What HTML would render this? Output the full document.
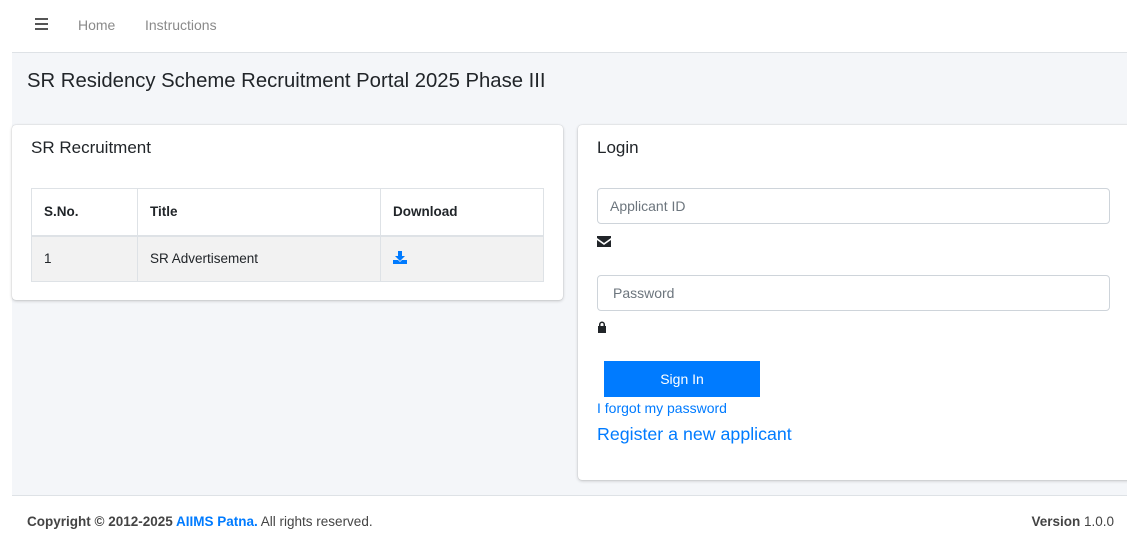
<!DOCTYPE html>
<html><head><meta charset="utf-8"><style>
*{box-sizing:border-box;margin:0;padding:0}
body{width:1127px;height:551px;overflow:hidden;background:#fff;font-family:"Liberation Sans",sans-serif;color:#212529;position:relative}
.a{position:absolute}
.nav{left:12px;top:0;width:1115px;height:53px;border-bottom:1px solid #dee2e6;background:#fff}
.navt{color:#8a8a8a;font-size:14px;top:17px}
.bg{left:12px;top:53px;width:1115px;height:442px;background:#f4f6f9}
.card{background:#fff;border-radius:4px;box-shadow:0 0 1px rgba(0,0,0,.2),0 1px 3px rgba(0,0,0,.2)}
table{border-collapse:collapse;font-size:13.5px}
td,th{border:1px solid #dee2e6;padding:0 12px;text-align:left}
th{height:47px;border-bottom:2px solid #dee2e6}
td{height:46px;background:#f2f2f2}
.inp{border:1px solid #ced4da;border-radius:4px;height:36px;width:513px;color:#6c757d;font-size:14px;padding:9px 12px}
.foot{left:12px;top:495px;width:1115px;height:56px;border-top:1px solid #dee2e6;font-size:13.5px;color:#444}
</style></head><body>
<div class="a nav"></div>
<div class="a" style="left:35px;top:18px;width:13px;height:2px;background:#555;box-shadow:0 5px 0 #555,0 10px 0 #555"></div>
<div class="a navt" style="left:78px">Home</div>
<div class="a navt" style="left:145px">Instructions</div>
<div class="a bg"></div>
<div class="a" style="left:27px;top:70px;font-size:20.3px">SR Residency Scheme Recruitment Portal 2025 Phase III</div>
<div class="a card" style="left:12px;top:125px;width:551px;height:175px"></div>
<div class="a" style="left:31px;top:138px;font-size:17px">SR Recruitment</div>
<table class="a" style="left:31px;top:188px;width:513px">
<tr><th style="width:106px">S.No.</th><th style="width:243px">Title</th><th>Download</th></tr>
<tr><td>1</td><td>SR Advertisement</td><td><svg width="14" height="13" viewBox="0 0 14 13"><path d="M5 0h4v5h3l-5 5-5-5h3z M0 9h5l2 2 2-2h5v4H0z" fill="#007bff"/></svg></td></tr>
</table>
<div class="a card" style="left:578px;top:125px;width:560px;height:355px"></div>
<div class="a" style="left:597px;top:138px;font-size:17px">Login</div>
<div class="a inp" style="left:597px;top:188px">Applicant ID</div>
<svg class="a" style="left:597px;top:236px" width="14" height="11" viewBox="0 0 14 11"><path d="M0 0h14v2L7 7 0 2z M0 4l7 5 7-5v7H0z" fill="#212529"/></svg>
<div class="a inp" style="left:597px;top:275px;padding-left:15px">Password</div>
<svg class="a" style="left:597px;top:321px" width="10" height="12" viewBox="0 0 10 12"><path d="M2 5V3.5a3 3 0 016 0V5h-1.5V3.5a1.5 1.5 0 00-3 0V5z M1 5h8v7H1z" fill="#212529"/></svg>
<div class="a" style="left:604px;top:361px;width:156px;height:36px;background:#007bff;color:#fff;font-size:14px;text-align:center;line-height:36px">Sign In</div>
<div class="a" style="left:597px;top:400px;color:#007bff;font-size:14px">I forgot my password</div>
<div class="a" style="left:597px;top:424px;color:#007bff;font-size:17.8px">Register a new applicant</div>
<div class="a foot"></div>
<div class="a" style="left:27px;top:514px;font-size:13.5px;color:#444"><b>Copyright © 2012-2025 <span style="color:#007bff">AIIMS Patna.</span></b> All rights reserved.</div>
<div class="a" style="right:13px;top:514px;font-size:13.5px;color:#444"><b>Version</b> 1.0.0</div>
</body></html>
